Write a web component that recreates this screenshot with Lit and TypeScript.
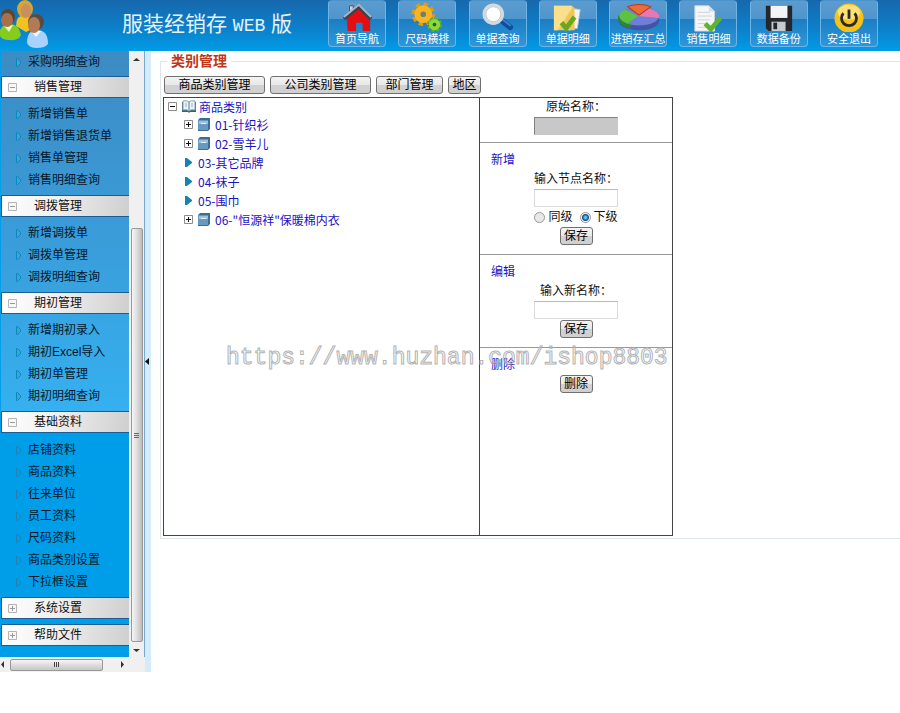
import { LitElement, html, css, svg, nothing } from "lit";
import { customElement, state } from "lit/decorators.js";
import { classMap } from "lit/directives/class-map.js";

const FONT = css`"Liberation Sans", "Noto Sans CJK SC", sans-serif`;

const icons: Record<string, unknown> = {
  home: svg`
    <path d="M9 10V4h4v4" fill="#c9d2da" stroke="#46505c"/>
    <path d="M8 4q3-4 8-1" fill="none" stroke="#8b98a6"/>
    <path d="M6 16 19 6l12 10v15h-8v-9h-7v9H7z" fill="#e50c12"/>
    <path d="M3 18 19 5l13 13" fill="none" stroke="#39434f" stroke-width="4"/>
    <path d="M3 16 19 3l13 13" fill="none" stroke="#aab6c1" stroke-width="2"/>`,
  gears: svg`
    <circle cx="13" cy="13" r="10" fill="none" stroke="#e39b0a" stroke-width="5" stroke-dasharray="4.5 3.35"/>
    <circle cx="13" cy="13" r="6" fill="none" stroke="#f9b51c" stroke-width="7"/>
    <circle cx="13" cy="13" r="3" fill="#6d7f78"/>
    <circle cx="25" cy="24" r="6" fill="none" stroke="#5fb312" stroke-width="4" stroke-dasharray="2.7 2"/>
    <circle cx="25" cy="24" r="4" fill="none" stroke="#8ddb2d" stroke-width="4"/>
    <circle cx="25" cy="24" r="1.8" fill="#2d6710"/>`,
  search: svg`
    <path d="M20 19l10 8" stroke="#0e4c9c" stroke-width="6" stroke-linecap="round"/>
    <path d="M21 18l9 7" stroke="#3a83cf" stroke-width="2" stroke-linecap="round"/>
    <circle cx="12" cy="13" r="10" fill="#fff" stroke="#d3dade" stroke-width="3"/>
    <circle cx="12" cy="13" r="8" fill="#fff" stroke="#b5c0c8"/>`,
  folder: svg`
    <path d="M21 7l9 1-3 20-9 2z" fill="#f2f5f8" stroke="#b9c3cc"/>
    <path d="M2 4h19l3 2v24H2z" fill="#f1c658"/>
    <path d="M2 4h19v3L6 30H2z" fill="#fbe08c"/>
    <path d="M10 22l5 6 9-12" fill="none" stroke="#67a81d" stroke-width="5"/>`,
  pie: svg`
    <path d="M0 15v4c0 7 8 11 18 11s17-4 17-10v-4z" fill="#4254a8"/>
    <path d="M0 14v4c0 5 5 8 10 10l6-12z" fill="#2a8a2b"/>
    <ellipse cx="18" cy="15" rx="17" ry="10" fill="#6d7fd6"/>
    <path d="M17 15 6 8c-7 4-7 10 2 15z" fill="#5cc33f"/>
    <path d="M17 15 26 7c6 2 9 5 9 8v2z" fill="#e878b4"/>
    <path d="M18 14 8 5c6-3 14-3 20 0z" fill="#ef6b3a" stroke="#b93c17"/>`,
  sheet: svg`
    <path d="M3 4h15l6 6v21H3z" fill="#f4f6f7" stroke="#cdd5da"/>
    <path d="M18 4v6h6" fill="#d5dce1"/>
    <path d="M6 11h13M6 15h15M6 19h13M6 23h9M6 27h9" stroke="#ccd2d7"/>
    <path d="M14 23l6 6 10-12" fill="none" stroke="#5fb52a" stroke-width="5"/>`,
  floppy: svg`
    <path d="M3 4h28v27H6l-3-3z" fill="#23262b"/>
    <path d="M8 4h18v13H8z" fill="#f2f4f6"/>
    <path d="M9 21h15v10H9z" fill="#c5cace"/>
    <path d="M11 22h4v7h-4z" fill="#23262b"/>`,
  power: svg`
    <circle cx="17" cy="17" r="15.5" fill="#f5c21c"/>
    <ellipse cx="17" cy="11" rx="12" ry="8" fill="#fde27a"/>
    <path d="M11 12a8 8 0 1 0 12 0" fill="none" stroke="#2c2a22" stroke-width="3"/>
    <path d="M17 8v10" stroke="#2c2a22" stroke-width="3"/>`,
};

const tools = [
  ["home", "首页导航"],
  ["gears", "尺码横排"],
  ["search", "单据查询"],
  ["folder", "单据明细"],
  ["pie", "进销存汇总"],
  ["sheet", "销售明细"],
  ["floppy", "数据备份"],
  ["power", "安全退出"],
];

interface Group {
  title: string;
  items: string[];
}

const groups: Group[] = [
  { title: "", items: ["采购明细查询"] },
  { title: "销售管理", items: ["新增销售单", "新增销售退货单", "销售单管理", "销售明细查询"] },
  { title: "调拨管理", items: ["新增调拨单", "调拨单管理", "调拨明细查询"] },
  { title: "期初管理", items: ["新增期初录入", "期初Excel导入", "期初单管理", "期初明细查询"] },
  {
    title: "基础资料",
    items: ["店铺资料", "商品资料", "往来单位", "员工资料", "尺码资料", "商品类别设置", "下拉框设置"],
  },
  { title: "系统设置", items: [] },
  { title: "帮助文件", items: [] },
];

@customElement("app-header")
class AppHeader extends LitElement {
  static styles = css`
    :host {
      display: flex;
      height: 51px;
      background: linear-gradient(#1768ad, #0b82cc 60%, #009ce8);
      font-family: ${FONT};
    }
    .brand {
      flex: none;
      display: flex;
      width: 328px;
    }
    .people {
      flex: none;
      width: 50px;
      height: 48px;
      margin-right: 72px;
    }
    h1 {
      margin: 0;
      color: #e4f4ff;
      font-size: 21px;
      font-weight: 400;
      line-height: 48px;
      white-space: nowrap;
    }
    .latin {
      font-family: "Liberation Mono", monospace;
      font-size: 18px;
    }
    nav {
      flex: 1;
      display: flex;
      justify-content: space-between;
      margin-right: 22px;
    }
    button {
      box-sizing: border-box;
      width: 58px;
      height: 47px;
      padding: 1px 0 0;
      border: 1px solid #6fb4e2;
      border-top-color: #4a94cc;
      border-radius: 4px;
      background: linear-gradient(#5d9bce, #4d96cf 40%, #1d7dc2 41%, #2b98dc);
      color: #fff;
      font-family: inherit;
      font-size: 11px;
      line-height: 14px;
      display: flex;
      flex-direction: column;
      align-items: center;
      white-space: nowrap;
    }
    .icon {
      flex: none;
      width: 36px;
      height: 30px;
    }
    .wide {
      width: 42px;
    }
  `;

  render() {
    return html`
      <div class="brand">
        <svg class="people" viewBox="0 0 50 48" aria-hidden="true">
          <path d="M16 26q0-11 9-11t9 13l-8 4z" fill="#f2c320" />
          <ellipse cx="25" cy="9" rx="8" ry="9" fill="#d9a52c" />
          <ellipse cx="26" cy="11" rx="5" ry="7" fill="#c98f60" />
          <path d="M0 36V30q3-7 10-6 9 0 11 11-2 6-12 5-7 0-9-4z" fill="#86cc1d" />
          <path d="M4 26l5 6 4-7z" fill="#e9f7c9" />
          <ellipse cx="8" cy="17" rx="7" ry="8" fill="#5b4631" />
          <ellipse cx="7" cy="20" rx="6" ry="7" fill="#a8714b" />
          <path d="M27 43q0-13 10-13 11 0 11 14-3 4-11 4-8 0-10-5z" fill="#a9d2fa" />
          <path d="M31 31l5 6 5-6z" fill="#f2f8ff" />
          <ellipse cx="36" cy="22" rx="8" ry="8" fill="#5b4a40" />
          <ellipse cx="34" cy="25" rx="6" ry="8" fill="#b37a56" />
        </svg>
        <h1>服装经销存 <span class="latin">WEB</span> 版</h1>
      </div>
      <nav>
        ${tools.map(
          ([icon, label]) => html`
            <button type="button">
              <svg
                class=${classMap({ icon: true, wide: icon === "pie" })}
                viewBox="-1 0 36 32"
                preserveAspectRatio=${icon === "pie" ? "none" : "xMidYMid meet"}
                aria-hidden="true"
              >
                ${icons[icon]}
              </svg>
              ${label}
            </button>
          `,
        )}
      </nav>
    `;
  }
}

@customElement("side-menu")
class SideMenu extends LitElement {
  static styles = css`
    :host {
      display: grid;
      grid-template-columns: 129px 16px;
      grid-template-rows: auto 15px;
      background: #f0f0f0;
      font-family: ${FONT};
      font-size: 12px;
      line-height: 22px;
    }
    .menu {
      padding: 0 0 6px 1px;
      background: #009de8;
    }
    .upper {
      background: linear-gradient(#3d8bc3, #3a9ad6 45%, #35b0f0);
    }
    h2 {
      box-sizing: border-box;
      height: 22px;
      margin: 0;
      border: 1px solid #1c5c90;
      border-right: 0;
      background: linear-gradient(100deg, #fff, #f1f1f1 40%, #cfcfcf);
      font-size: 12px;
      font-weight: 400;
    }
    .toggle {
      display: flex;
      align-items: center;
      width: 100%;
      height: 20px;
      padding: 0 0 0 6px;
      border: 0;
      background: none;
      color: #111;
      font: inherit;
      white-space: nowrap;
    }
    .toggle svg {
      width: 9px;
      height: 9px;
      margin-right: 17px;
    }
    ul {
      margin: 0;
      padding: 5px 0 4px 14px;
      list-style: none;
    }
    .partial {
      padding-top: 0;
      padding-bottom: 3px;
    }
    .tail {
      padding-top: 6px;
    }
    .closed {
      margin-bottom: 5px;
    }
    a {
      display: flex;
      align-items: center;
      height: 22px;
      color: #04182b;
      text-decoration: none;
      white-space: nowrap;
    }
    .mark {
      width: 7px;
      height: 9px;
      margin-right: 6px;
    }
    .bar {
      display: flex;
      align-items: center;
      background: #f0f0f0;
    }
    .vertical {
      flex-direction: column;
      box-sizing: border-box;
      padding: 6px 0 4px;
      border-right: 1px solid #78a9cc;
    }
    .horizontal {
      padding-right: 4px;
    }
    .arrow {
      flex: none;
      width: 7px;
      height: 5px;
    }
    .side {
      width: 5px;
      height: 7px;
    }
    .thumb {
      box-sizing: border-box;
      display: flex;
      align-items: center;
      justify-content: center;
      border: 1px solid #999;
      border-radius: 2px;
    }
    .vertical .thumb {
      flex: 416;
      width: 12px;
      margin-bottom: 6px;
      background: linear-gradient(90deg, #f5f5f5, #ddd 50%, #bbb);
    }
    .before {
      flex: 168;
    }
    .horizontal .thumb {
      flex: 92;
      height: 12px;
      margin-left: 5px;
      background: linear-gradient(#f5f5f5, #ddd 50%, #c6c6c6);
    }
    .after {
      flex: 17;
    }
    .grip {
      width: 7px;
      height: 7px;
    }
  `;

  private group(g: Group, index: number) {
    const open = g.items.length > 0;
    return html`
      ${g.title
        ? html`<h2 class=${classMap({ closed: !open })}>
            <button type="button" class="toggle" aria-expanded=${open}>
              <svg viewBox="0 0 9 9" aria-hidden="true">
                <path d="M.5.5h8v8h-8z" fill="#f8f8f8" stroke="#b4b4b4" />
                <path d=${open ? "M2 4.5h5" : "M2 4.5h5M4.5 2v5"} stroke="#999" />
              </svg>
              ${g.title}
            </button>
          </h2>`
        : nothing}
      ${open
        ? html`<ul class=${classMap({ partial: index === 0, tail: index === 4 })}>
            ${g.items.map(
              (item) => html`<li>
                <a href="#">
                  <svg class="mark" viewBox="0 0 7 9" aria-hidden="true">
                    <path
                      d="M1.5.5v8h1l3-3v-2l-3-3z"
                      fill=${index < 4 ? "#2fa9dd" : "none"}
                      stroke=${index < 4 ? "#0f86b8" : "#2580ad"}
                    />
                  </svg>
                  ${item}
                </a>
              </li>`,
            )}
          </ul>`
        : nothing}
    `;
  }

  render() {
    return html`
      <nav class="menu">
        <div class="upper">${groups.slice(0, 4).map((g, i) => this.group(g, i))}</div>
        ${groups.slice(4).map((g, i) => this.group(g, i + 4))}
      </nav>
      <div class="bar vertical">
        <svg class="arrow" viewBox="0 0 7 5"><path d="M0 4h7L3.5 1z" fill="#333" /></svg>
        <div class="before"></div>
        <div class="thumb">
          <svg class="grip" viewBox="0 0 7 7"><path d="M1 1.5h5M1 3.5h5M1 5.5h5" stroke="#666" /></svg>
        </div>
        <svg class="arrow" viewBox="0 0 7 5"><path d="M0 1h7L3.5 4z" fill="#333" /></svg>
      </div>
      <div class="bar horizontal">
        <svg class="arrow side" viewBox="0 0 5 7"><path d="M4 0v7L1 3.5z" fill="#333" /></svg>
        <div class="thumb">
          <svg class="grip" viewBox="0 0 7 7"><path d="M1.5 1v5M3.5 1v5M5.5 1v5" stroke="#444" /></svg>
        </div>
        <div class="after"></div>
        <svg class="arrow side" viewBox="0 0 5 7"><path d="M1 0v7l3-3.5z" fill="#333" /></svg>
      </div>
    `;
  }
}

interface TreeNode {
  label: string;
  leaf: boolean;
}

const nodes: TreeNode[] = [
  { label: "01-针织衫", leaf: false },
  { label: "02-雪羊儿", leaf: false },
  { label: "03-其它品牌", leaf: true },
  { label: "04-袜子", leaf: true },
  { label: "05-围巾", leaf: true },
  { label: '06-"恒源祥"保暖棉内衣', leaf: false },
];

@customElement("category-tree")
class CategoryTree extends LitElement {
  static styles = css`
    :host {
      display: block;
      font-family: "Noto Sans CJK SC", sans-serif;
      font-size: 12px;
      line-height: 17px;
    }
    ul {
      margin: 0;
      padding: 0 0 0 4px;
      list-style: none;
    }
    ul ul {
      padding-left: 16px;
    }
    .row {
      display: flex;
      align-items: center;
      height: 19px;
      white-space: nowrap;
    }
    .root {
      height: 17px;
    }
    a {
      color: #1a12c4;
      text-decoration: none;
    }
    .box {
      width: 9px;
      height: 9px;
      margin-right: 4px;
    }
    .book {
      width: 14px;
      height: 13px;
      margin-right: 4px;
    }
    .open {
      margin-left: 1px;
      margin-right: 3px;
    }
    .leaf {
      width: 9px;
      height: 11px;
      margin-right: 5px;
    }
  `;

  private box(open: boolean) {
    return html`<svg class="box" viewBox="0 0 9 9" aria-hidden="true">
      <path d="M.5.5h8v8h-8z" fill="#fff" stroke="#8c8c8c" />
      <path d=${open ? "M2 4.5h5" : "M2 4.5h5M4.5 2v5"} stroke="#111" />
    </svg>`;
  }

  render() {
    return html`
      <ul>
        <li>
          <div class="row root">
            ${this.box(true)}
            <svg class="book open" viewBox="0 0 14 13" aria-hidden="true">
              <path d="M0 2h14v10H8l-1 1-1-1H0z" fill="#35617a" />
              <path d="M1 1q4-1 6 1v9q-2-2-6-1zM13 1q-4-1-6 1v9q2-2 6-1z" fill="#e9f3f5" stroke="#83a8b7" />
              <path d="M3 4h2M3 6h2M9 4h2M9 6h2" stroke="#9bb6bf" />
            </svg>
            <a href="#">商品类别</a>
          </div>
          <ul>
            ${nodes.map(
              (n) => html`<li class="row">
                ${n.leaf
                  ? html`<svg class="leaf" viewBox="0 0 9 11" aria-hidden="true">
                      <path d="M1 1h2l5 4v1l-5 4H1z" fill="#1583b5" />
                    </svg>`
                  : html`${this.box(false)}
                      <svg class="book" viewBox="0 0 14 13" aria-hidden="true">
                        <path d="M1 2l2-2h10v11l-2 2H1z" fill="#3f6c92" />
                        <path d="M1 2h10v10H1z" fill="#6798c2" />
                        <path d="M2 3h9v3H2z" fill="#9dc1dc" />
                        <path d="M4 5.5h5" stroke="#e7f2fa" />
                      </svg>`}
                <a href="#">${n.label}</a>
              </li>`,
            )}
          </ul>
        </li>
      </ul>
    `;
  }
}

@customElement("app-root")
class AppRoot extends LitElement {
  @state() private level = "child";

  static styles = css`
    :host {
      display: block;
      overflow: hidden;
      background: #fff;
      color: #111;
      font-family: ${FONT};
      font-size: 12px;
      line-height: 18px;
    }
    .body {
      display: grid;
      grid-template-columns: auto 6px minmax(0, 1fr);
    }
    .splitter {
      display: flex;
      align-items: center;
      padding: 0;
      border: 0;
      background: #d4ebfb;
    }
    .splitter svg {
      width: 4px;
      height: 7px;
    }
    main {
      padding-left: 9px;
    }
    fieldset {
      min-width: 0;
      margin: 0 -4px 0 0;
      padding: 5px 6px 2px 2px;
      border: 1px solid #dce6ec;
    }
    legend {
      margin-left: 4px;
      padding: 0 4px;
      color: #c23616;
      font-size: 14px;
      font-weight: 700;
      line-height: 20px;
    }
    .tabs {
      display: flex;
      gap: 5px;
      padding: 0 1px 3px;
    }
    .btn {
      box-sizing: border-box;
      height: 18px;
      padding: 0 3px;
      border: 1px solid #707070;
      border-radius: 3px;
      background: linear-gradient(#f4f4f4, #e8e8e8 50%, #d2d2d2 51%, #d0d0d0);
      color: #000;
      font-family: inherit;
      font-size: 12px;
      line-height: 14px;
      white-space: nowrap;
    }
    .short {
      width: 33px;
    }
    .medium {
      width: 67px;
    }
    .long {
      width: 101px;
    }
    .panel {
      position: relative;
      box-sizing: border-box;
      display: grid;
      grid-template-columns: 315fr 193fr;
      max-width: 510px;
      min-height: 439px;
      border: 1px solid #444;
    }
    .forms {
      border-left: 1px solid #444;
    }
    .section {
      display: flex;
      flex-direction: column;
      align-items: center;
      gap: 1px;
      margin: 0;
      padding: 8px 0 9px;
      border-bottom: 1px solid #999;
    }
    .section.first {
      padding: 0 0 7px;
    }
    .section.last {
      border-bottom: 0;
    }
    h2 {
      align-self: stretch;
      margin: 0;
      padding-left: 11px;
      color: #1a12c4;
      font-size: 12px;
      font-weight: 400;
    }
    .text {
      box-sizing: border-box;
      width: 84px;
      height: 18px;
      padding: 0 2px;
      border: 1px solid #dcdcdc;
      border-top-color: #b8b8b8;
      background: #fff;
      font: inherit;
    }
    .text:disabled {
      border-color: #808080 #c8c8c8 #c8c8c8 #808080;
      background: #c8c8c8;
    }
    .choices {
      display: flex;
      gap: 7px;
      height: 18px;
    }
    .choices label {
      display: flex;
      align-items: center;
      gap: 3px;
    }
    .choices input {
      appearance: none;
      box-sizing: border-box;
      width: 11px;
      height: 11px;
      margin: 0;
      border: 1px solid #999;
      border-radius: 50%;
      background: #e8e8e8;
    }
    .choices input:checked {
      background: radial-gradient(circle, #5cc4ee 0 1px, #0f4d80 3px, #f4f4f4 4px);
    }
    .watermark {
      position: absolute;
      left: 62px;
      top: 246px;
      color: transparent;
      -webkit-text-stroke: 1px #b4b4b4;
      font-family: "Liberation Mono", monospace;
      font-size: 23px;
      line-height: 28px;
      white-space: nowrap;
      pointer-events: none;
    }
  `;

  private choice(value: string, label: string) {
    return html`<label>
      <input
        type="radio"
        name="level"
        value=${value}
        .checked=${this.level === value}
        @change=${() => (this.level = value)}
      />${label}
    </label>`;
  }

  render() {
    return html`
      <app-header></app-header>
      <div class="body">
        <side-menu></side-menu>
        <button type="button" class="splitter" aria-label="收起菜单">
          <svg viewBox="0 0 4 7" aria-hidden="true"><path d="M4 0v7L0 3.5z" fill="#111" /></svg>
        </button>
        <main>
          <fieldset>
            <legend>类别管理</legend>
            <div class="tabs">
              <button type="button" class="btn long">商品类别管理</button>
              <button type="button" class="btn long">公司类别管理</button>
              <button type="button" class="btn medium">部门管理</button>
              <button type="button" class="btn short">地区</button>
            </div>
            <div class="panel">
              <category-tree></category-tree>
              <div class="forms">
                <div class="section first">
                  <label for="original">原始名称：</label>
                  <input id="original" class="text" disabled />
                </div>
                <form class="section">
                  <h2>新增</h2>
                  <label for="node">输入节点名称：</label>
                  <input id="node" class="text" />
                  <div class="choices">${this.choice("same", "同级")}${this.choice("child", "下级")}</div>
                  <button type="button" class="btn short">保存</button>
                </form>
                <form class="section">
                  <h2>编辑</h2>
                  <label for="rename">输入新名称：</label>
                  <input id="rename" class="text" />
                  <button type="button" class="btn short">保存</button>
                </form>
                <form class="section last">
                  <h2>删除</h2>
                  <button type="button" class="btn short">删除</button>
                </form>
              </div>
              <div class="watermark">https://www.huzhan.com/ishop8803</div>
            </div>
          </fieldset>
        </main>
      </div>
    `;
  }
}
